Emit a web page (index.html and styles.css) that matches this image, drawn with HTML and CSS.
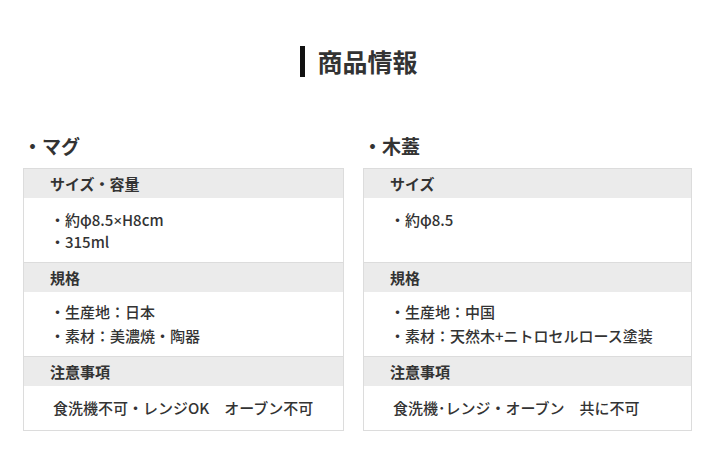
FILE: index.html
```html
<!DOCTYPE html>
<html lang="ja">
<head>
<meta charset="utf-8">
<link rel="stylesheet" href="styles.css">
</head>
<body>
<div class="page">
  <h1 class="title"><span class="bar"></span><span class="title-text">商品情報</span></h1>
  <div class="columns">
    <section class="col col-left">
      <h2 class="col-title">・マグ</h2>
      <div class="card">
        <div class="head">サイズ・容量</div>
        <div class="body body-size">
          <p class="line-tight">・約φ8.5<span class="times">×</span>H8cm</p>
          <p class="line-tight">・315ml</p>
        </div>
        <div class="head">規格</div>
        <div class="body body-spec">
          <p class="line">・生産地：日本</p>
          <p class="line">・素材：美濃焼・陶器</p>
        </div>
        <div class="head">注意事項</div>
        <div class="body body-note">
          <p class="note">食洗機不可・レンジOK　オーブン不可</p>
        </div>
      </div>
    </section>
    <section class="col col-right">
      <h2 class="col-title">・木蓋</h2>
      <div class="card">
        <div class="head">サイズ</div>
        <div class="body body-size">
          <p class="line-tight">・約φ8.5</p>
        </div>
        <div class="head">規格</div>
        <div class="body body-spec">
          <p class="line">・生産地：中国</p>
          <p class="line">・素材：天然木+ニトロセルロース塗装</p>
        </div>
        <div class="head">注意事項</div>
        <div class="body body-note">
          <p class="note">食洗機･レンジ・オーブン　共に不可</p>
        </div>
      </div>
    </section>
  </div>
</div>
</body>
</html>
```
FILE: styles.css
```css
* { box-sizing: border-box; }
html, body { margin: 0; padding: 0; background: #fff; }
body {
  font-family: "Noto Sans CJK JP", "Noto Sans", sans-serif;
  color: #333;
  width: 720px;
  height: 470px;
  overflow: hidden;
}
.page { padding-top: 46px; }
.title {
  margin: 0;
  display: flex;
  justify-content: center;
  align-items: center;
  height: 31px;
  padding-right: 2px;
}
.bar {
  width: 5px;
  height: 31px;
  background: #111;
}
.title-text {
  font-size: 25px;
  font-weight: 700;
  line-height: 31px;
  margin-left: 12px;
  color: #333;
}
.columns {
  display: grid;
  grid-template-columns: 321px 329px;
  column-gap: 19px;
  padding-left: 23px;
  margin-top: 55px;
}
.col-title {
  margin: 0 0 8px 0;
  font-size: 19px;
  font-weight: 700;
  line-height: 28px;
  color: #333;
}
.card {
  border: 1px solid #dcdcdc;
}
.head {
  height: 30px;
  line-height: 29px;
  background: #ebebeb;
  padding-left: 26px;
  font-size: 15px;
  font-weight: 700;
  border-top: 1px solid #dcdcdc;
}
.head:first-child { border-top: 0; height: 29px; }
.body {
  padding-left: 26px;
}
.body p { margin: 0; font-size: 15px; font-weight: 500; }
.times { font-family: "Noto Sans", sans-serif; }
.body-size { height: 64px; padding-top: 11px; }
.line-tight { line-height: 21px; }
.body-spec { height: 64px; padding-top: 8px; }
.line { line-height: 24px; }
.body-note { height: 44px; padding-top: 10px; padding-left: 29px; }
.note { line-height: 24px; }
```
